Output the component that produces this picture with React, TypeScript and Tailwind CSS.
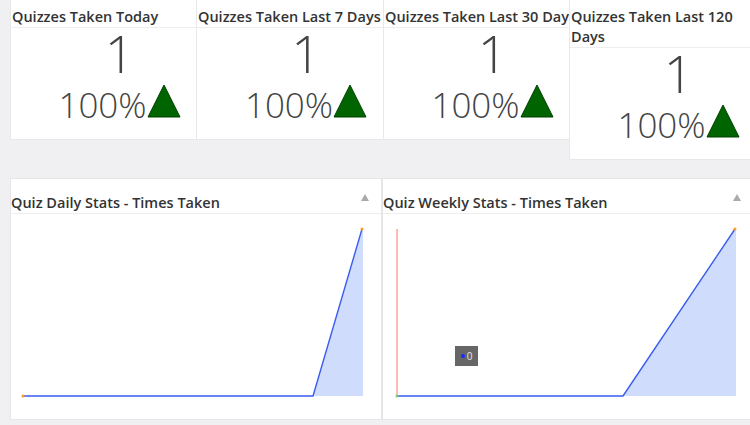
const statCards = [
  { title: "Quizzes Taken Today", width: "w-[186px]" },
  { title: "Quizzes Taken Last 7 Days", width: "w-[187px]" },
  { title: "Quizzes Taken Last 30 Days", width: "w-[186px]" },
  { title: "Quizzes Taken Last 120 Days", width: "w-[186px]", wrap: true },
];

const UpArrow = () => (
  <svg width="34" height="34" viewBox="0 0 34 34" className="block mb-[4px]">
    <polygon points="17,1 33,33 1,33" fill="#006400" stroke="#004000" strokeWidth="1" />
  </svg>
);

const StatCard = ({ title, width, wrap }: { title: string; width: string; wrap?: boolean }) => (
  <div className={`${width} shrink-0 bg-white border-l border-b border-[#e8e8e8]`}>
    <div
      className={`pt-[7px] pl-[1px] text-[14.5px] leading-[20px] font-semibold text-[#333] border-b border-[#eeeeee] ${
        wrap ? "" : "whitespace-nowrap overflow-hidden"
      }`}>
      {title}
    </div>
    <div className="pl-[32px] pb-[17px] text-[#444]">
      <div className="text-center text-[52px] leading-[50px] font-light">1</div>
      <div className="flex items-end justify-center mt-[6px]">
        <span className="text-[35px] leading-none font-light">100%</span>
        <UpArrow />
      </div>
    </div>
  </div>
);

const Tri = () => (
  <svg width="8" height="7" viewBox="0 0 8 7" className="block">
    <polygon points="4,0 8,7 0,7" fill="#aaaaaa" />
  </svg>
);

const ChartCard = ({
  title,
  flatEnd,
  peakX,
  axis,
  tooltip,
}: {
  title: string;
  flatEnd: number;
  peakX: number;
  axis?: boolean;
  tooltip?: boolean;
}) => (
  <div className="w-[372px] shrink-0 bg-white border border-[#e6e6e6]">
    <div className="flex items-start justify-between pt-[14px] pr-[12px] border-b border-[#eeeeee]">
      <div className="text-[14.5px] leading-[20px] font-semibold text-[#333] whitespace-nowrap">
        {title}
      </div>
      <div className="mt-[1px]">
        <Tri />
      </div>
    </div>
    <div className="relative h-[205px]">
      <svg width="372" height="205" className="block">
        <polygon
          points={`${flatEnd},182 ${peakX},15 ${peakX + 1},15 ${peakX + 1},182`}
          fill="#cfdcfb"
        />
        {axis && <line x1="14" y1="15" x2="14" y2="182" stroke="#ff8c80" strokeWidth="1.2" />}
        <polyline
          points={`${axis ? 14 : 12},182 ${flatEnd},182 ${peakX},15`}
          fill="none"
          stroke="#3a5cf2"
          strokeWidth="1.4"
        />
        <circle cx={axis ? 14 : 12} cy="182" r="1.5" fill={axis ? "#7ccf6a" : "#ff9a1a"} />
        <circle cx={peakX} cy="15" r="1.5" fill="#ff9a1a" />
      </svg>
      {tooltip && (
        <div className="absolute left-[72px] top-[132px] w-[23px] h-[20px] bg-[#666666] flex items-center justify-center gap-[2px]">
          <span className="w-[4px] h-[4px] rounded-full bg-[#1a2bff]" />
          <span className="text-[10px] leading-none text-[#e6e6e6]">0</span>
        </div>
      )}
    </div>
  </div>
);

export default function App() {
  return (
    <div
      className="w-[750px] h-[425px] overflow-hidden bg-[#f0eff2]"
      style={{ fontFamily: '"Open Sans", "Noto Sans", sans-serif' }}>
      <div className="flex items-start pl-[10px]">
        {statCards.map((c) => (
          <StatCard key={c.title} {...c} />
        ))}
      </div>
      <div className="flex mt-[18px] pl-[10px]">
        <ChartCard title="Quiz Daily Stats - Times Taken" flatEnd={302} peakX={351} />
        <ChartCard
          title="Quiz Weekly Stats - Times Taken"
          flatEnd={240}
          peakX={352}
          axis
          tooltip
        />
      </div>
    </div>
  );
}
